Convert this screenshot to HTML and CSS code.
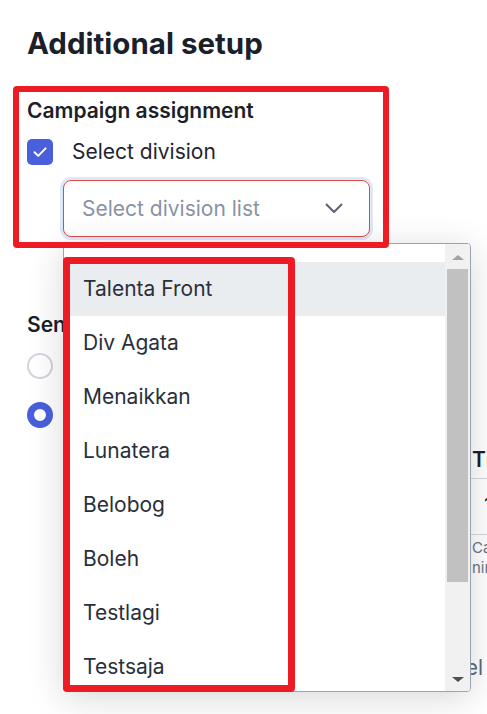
FILE: index.html
```html
<!DOCTYPE html>
<html lang="en">
<head>
<meta charset="utf-8">
<title>Additional setup</title>
<link rel="stylesheet" href="styles.css">
</head>
<body>
<main class="page">
  <h1 class="title">Additional setup</h1>

  <section class="block block-campaign">
    <h2 class="block-title">Campaign assignment</h2>
    <label class="check-row">
      <span class="checkbox">
        <svg width="26" height="26" viewBox="0 0 26 26" aria-hidden="true"><path d="M7.5 13.2 L11.2 16.9 L18.6 9.4" fill="none" stroke="#ffffff" stroke-width="2" stroke-linecap="round" stroke-linejoin="round"/></svg>
      </span>
      <span class="check-label">Select division</span>
    </label>

    <div class="select-wrap">
      <div class="select">
        <span class="placeholder">Select division list</span>
        <svg class="chevron" width="18" height="11" viewBox="0 0 18 11" aria-hidden="true"><path d="M1.5 1.5 L9 9 L16.5 1.5" fill="none" stroke="#5b6477" stroke-width="2" stroke-linecap="round" stroke-linejoin="round"/></svg>
      </div>
      <div class="listbox">
        <ul class="options">
          <li class="option active">Talenta Front</li>
          <li class="option">Div Agata</li>
          <li class="option">Menaikkan</li>
          <li class="option">Lunatera</li>
          <li class="option">Belobog</li>
          <li class="option">Boleh</li>
          <li class="option">Testlagi</li>
          <li class="option">Testsaja</li>
        </ul>
        <div class="scrollbar">
          <div class="sb-btn"><span class="tri-up"></span></div>
          <div class="sb-thumb"></div>
          <div class="sb-space"></div>
          <div class="sb-btn"><span class="tri-down"></span></div>
        </div>
      </div>
    </div>
  </section>

  <section class="block block-schedule">
    <h2 class="block-title">Sending schedule</h2>
    <div class="radio-list">
      <label class="radio-row"><span class="radio"></span><span class="radio-label">Send immediately</span></label>
      <label class="radio-row"><span class="radio checked"></span><span class="radio-label">Set schedule</span></label>
    </div>
    <table class="sched-table">
      <thead>
        <tr><th class="col-day">Day</th><th class="col-time">Time</th></tr>
      </thead>
      <tbody>
        <tr class="row-time"><td class="col-day">Every day</td><td class="col-time cell-value">10:00</td></tr>
        <tr class="row-help"><td class="col-day"></td><td class="col-time"><p class="help">Can run daily<br>nine times max</p></td></tr>
      </tbody>
    </table>
  </section>

  <div class="footer"><span class="btn-cancel">Cancel</span></div>
</main>

<div class="annot annot-1"></div>
<div class="annot annot-2"></div>
</body>
</html>
```

FILE: styles.css
```css
html, body {
  margin: 0;
  padding: 0;
  overflow: hidden;
  background: #ffffff;
}

body {
  font-family: Inter, "Noto Sans", "Liberation Sans", sans-serif;
  color: #1d2230;
  width: 487px;
  height: 714px;
  position: relative;
}

.page {
  padding: 26px 0 0 27px;
}

.title {
  margin: 0;
  font-size: 29.5px;
  line-height: 34px;
  font-weight: 700;
  color: #1b1f2a;
}

.block-campaign {
  margin-top: 39px;
}

.block-title {
  margin: 0;
  font-size: 21px;
  line-height: 24px;
  font-weight: 600;
  color: #1b1f2a;
  white-space: nowrap;
}

.check-row {
  margin-top: 16px;
  display: flex;
  align-items: center;
  gap: 19px;
  height: 26px;
}

.checkbox {
  width: 26px;
  height: 26px;
  border-radius: 5px;
  background: #4a5fdb;
  display: flex;
}

.check-label {
  font-size: 21px;
  line-height: 26px;
  color: #1f2430;
}

.select-wrap {
  position: relative;
  margin: 15px 0 0 36px;
  width: 307px;
}

.select {
  box-sizing: border-box;
  height: 57px;
  border: 1px solid #dc4a4a;
  border-radius: 8px;
  box-shadow: 0 0 0 3px #dfe8fb;
  background: #ffffff;
  display: flex;
  align-items: center;
  justify-content: space-between;
  padding: 0 26px 0 18px;
}

.placeholder {
  font-size: 21px;
  color: #8892a4;
}

.chevron {
  display: block;
}

.listbox {
  position: absolute;
  top: calc(100% + 6px);
  left: 0;
  width: 408px;
  height: 449px;
  box-sizing: border-box;
  border: 1px solid #9aa3b4;
  border-radius: 4px;
  background: #ffffff;
  box-shadow: 0 6px 36px rgba(0, 0, 0, 0.16);
  display: flex;
  overflow: hidden;
  z-index: 5;
}

.options {
  flex: 1;
  margin: 0;
  padding: 18px 0 0;
  list-style: none;
  overflow: hidden;
}

.option {
  height: 54px;
  line-height: 54px;
  padding-left: 19px;
  font-size: 21px;
  color: #2a2f3a;
  white-space: nowrap;
}

.option.active {
  background: #eaedf0;
}

.scrollbar {
  width: 25px;
  background: #f1f1f1;
  display: flex;
  flex-direction: column;
}

.sb-btn {
  box-sizing: border-box;
  height: 25px;
  padding-top: 11px;
  display: flex;
  justify-content: center;
}

.tri-up {
  width: 0;
  height: 0;
  border-left: 6px solid transparent;
  border-right: 6px solid transparent;
  border-bottom: 5px solid #a3a3a3;
}

.tri-down {
  width: 0;
  height: 0;
  border-left: 6px solid transparent;
  border-right: 6px solid transparent;
  border-top: 5px solid #505050;
}

.sb-thumb {
  height: 313px;
  margin: 0 2px;
  background: #c1c1c1;
}

.sb-space {
  flex: 1;
}

/* background section */
.block-schedule {
  margin-top: 76px;
}

.radio-list {
  margin-top: 16px;
  display: flex;
  flex-direction: column;
  gap: 23px;
}

.radio-row {
  display: flex;
  align-items: center;
  gap: 19px;
  height: 26px;
}

.radio {
  box-sizing: border-box;
  width: 26px;
  height: 26px;
  border-radius: 50%;
  border: 2px solid #d0d5dd;
  background: #ffffff;
}

.radio.checked {
  border: 7px solid #4a5fdb;
}

.radio-label {
  font-size: 21px;
  line-height: 26px;
}

.sched-table {
  margin: 10px 0 0 36px;
  border-collapse: separate;
  border-spacing: 0;
  width: 620px;
  text-align: left;
}

.sched-table .col-day {
  width: 409px;
  padding-left: 0;
}

.sched-table th {
  padding: 10px 0 6px;
  font-size: 21px;
  line-height: 24px;
  font-weight: 600;
  color: #1b1f2a;
  border-bottom: 1px solid #d3d8df;
}

.row-time td {
  padding: 15px 0 16px;
  font-size: 21px;
  line-height: 24px;
  border-bottom: 1px solid #d3d8df;
}

.row-time .cell-value {
  padding-left: 12px;
  color: #1f2430;
}

.row-help td {
  padding: 3px 0 0;
}

.help {
  margin: 0;
  font-size: 15px;
  line-height: 20px;
  color: #6b7585;
}

.footer {
  margin-top: 78px;
  display: flex;
  justify-content: flex-end;
  padding-right: 4px;
}

.btn-cancel {
  font-size: 21px;
  line-height: 24px;
  color: #5d6a80;
}

/* annotation overlays */
.annot {
  position: absolute;
  box-sizing: border-box;
  border-style: solid;
  border-color: #ed1c24;
  border-radius: 4px;
  pointer-events: none;
  z-index: 10;
}

.annot-1 {
  left: 13px;
  top: 86px;
  width: 376px;
  height: 162px;
  border-width: 6px;
}

.annot-2 {
  left: 63px;
  top: 257px;
  width: 232px;
  height: 435px;
  border-width: 7px;
}
```
